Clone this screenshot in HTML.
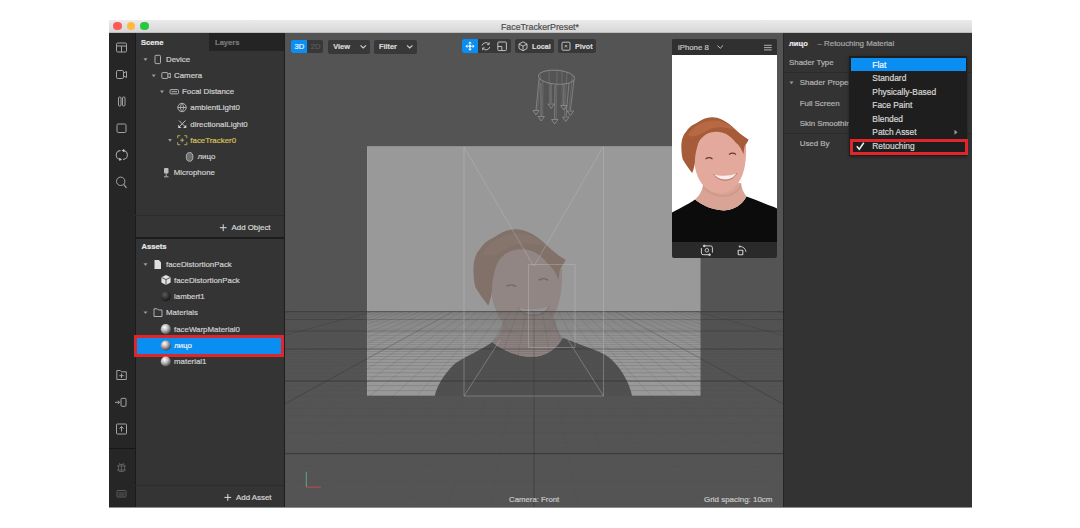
<!DOCTYPE html>
<html><head><meta charset="utf-8">
<style>
*{margin:0;padding:0;box-sizing:border-box}
html,body{width:1080px;height:528px;background:#fff;overflow:hidden;font-family:"Liberation Sans",sans-serif;position:relative}
.a{position:absolute}
.t{position:absolute;white-space:nowrap;color:#cfcfcf;font-size:7.9px;line-height:10px;height:10px;-webkit-text-stroke:0.2px currentColor}
.b{font-weight:bold}
svg{position:absolute;overflow:visible}
.btn{position:absolute;background:#383838;border-radius:2px}
</style></head><body>
<!-- window frame -->
<div class="a" style="left:109px;top:20px;width:863px;height:487px;background:#262626"></div>
<!-- title bar -->
<div class="a" style="left:109px;top:20px;width:863px;height:13px;background:linear-gradient(#ebebeb,#d7d7d7);border-bottom:1px solid #bdbdbd"></div>
<div class="a" style="left:113.3px;top:21.8px;width:8.6px;height:8.6px;border-radius:50%;background:#fc5b57"></div>
<div class="a" style="left:126.8px;top:21.8px;width:8.6px;height:8.6px;border-radius:50%;background:#fcba3e"></div>
<div class="a" style="left:140.4px;top:21.8px;width:8.6px;height:8.6px;border-radius:50%;background:#2bc63f"></div>
<div class="t" style="left:501px;top:21.5px;color:#4d4d4d;font-size:8.8px;line-height:10px">FaceTrackerPreset*</div>

<!-- left icon column -->
<div class="a" style="left:109px;top:33px;width:27px;height:474px;background:#262626;border-right:1px solid #1a1a1a"></div>
<div class="a" style="left:109px;top:448px;width:26px;height:1px;background:#171717"></div>
<svg width="1080" height="528" style="left:0;top:0" fill="none" stroke="#a3a3a3" stroke-width="1">
  <!-- layout -->
  <rect x="116.5" y="43" width="10" height="9" rx="1.2"/>
  <path d="M116.5 46H126.5M121.5 46V52"/>
  <!-- camera -->
  <rect x="116.5" y="70.5" width="7" height="8" rx="1.2"/>
  <path d="M123.5 73L126.5 71.5V77.5L123.5 76"/>
  <!-- pause-ish -->
  <rect x="118.5" y="97" width="2.5" height="9" rx="1"/>
  <rect x="122.5" y="97" width="2.5" height="9" rx="1"/>
  <!-- square -->
  <rect x="117" y="124" width="9" height="8.5" rx="1.2"/>
  <!-- refresh -->
  <path d="M120.6 150.6A4.4 4.4 0 0 0 120.6 159.4M123 159.4A4.4 4.4 0 0 0 123 150.6" stroke-width="1.1"/>
  <path d="M119.2 157.8L122 159.5L119.4 161Z M124.4 152.2L121.6 150.5L124.2 149Z" fill="#c8c8c8" stroke="none"/>
  <!-- search -->
  <circle cx="120.7" cy="181.3" r="4.2"/>
  <path d="M123.7 184.3L126.5 187.8" stroke-width="1.2"/>
  <!-- folder + -->
  <path d="M116.8 379.5V370.5H120.3L121.5 371.8H126.3V379.5Z"/>
  <path d="M121.5 373.5V378M119.3 375.7H123.8"/>
  <!-- import -->
  <rect x="121" y="398.3" width="5" height="8" rx="1"/>
  <path d="M115 402.3H119.5M117.8 400.6L119.6 402.3L117.8 404"/>
  <!-- upload -->
  <rect x="116.5" y="424" width="10" height="10" rx="0.8"/>
  <path d="M121.5 431.5V426.5M119.5 428.5L121.5 426.5L123.5 428.5"/>
  <!-- bug (dim) -->
  <g stroke="#5c5c5c">
    <rect x="118.5" y="464.5" width="6" height="7" rx="1.5"/>
    <path d="M117 466H126M117 470H126M121.5 464.5V471.5M119.5 463L120 464.5M123.5 463L123 464.5"/>
    <rect x="117" y="490.5" width="9" height="6.5" rx="0.8"/>
    <path d="M118.5 493H124.5M118.5 495H124.5"/>
  </g>
</svg>

<!-- scene panel -->
<div class="a" style="left:136px;top:33px;width:149px;height:474px;background:#343434"></div>
<div class="a" style="left:209px;top:33px;width:76px;height:18px;background:#242424"></div>
<div class="t b" style="left:141px;top:37.5px;color:#e8e8e8;font-size:7.6px">Scene</div>
<div class="t b" style="left:215px;top:37.5px;color:#7a7a7a;font-size:7.6px">Layers</div>

<svg width="1080" height="528" style="left:0;top:0" fill="none" stroke="#bdbdbd" stroke-width="0.9">
  <!-- triangles -->
  <g fill="#9a9a9a" stroke="none">
    <path d="M143.5 58.3H147.5L145.5 61Z"/>
    <path d="M151.7 74.5H155.7L153.7 77.2Z"/>
    <path d="M160 90.6H164L162 93.3Z"/>
    <path d="M168 139H172L170 141.7Z"/>
    <path d="M143.5 263.2H147.5L145.5 265.9Z"/>
    <path d="M143.5 311.4H147.5L145.5 314.1Z"/>
  </g>
  <!-- device phone -->
  <rect x="155" y="55.3" width="5.5" height="8.3" rx="1"/>
  <!-- camera -->
  <rect x="161.8" y="72.6" width="6" height="5.8" rx="0.8"/>
  <path d="M167.8 74.2L170.3 73.2V77.8L167.8 76.8"/>
  <!-- focal distance -->
  <rect x="170" y="89.6" width="8.5" height="4.2" rx="1"/>
  <path d="M171.5 91.7H177"/>
  <!-- ambient light globe -->
  <circle cx="182" cy="107.5" r="4.2"/>
  <path d="M177.8 107.5H186.2M182 103.3C180 105.5 180 109.5 182 111.7M182 103.3C184 105.5 184 109.5 182 111.7"/>
  <!-- directional light -->
  <path d="M179 120.5L185.5 127M185.5 120.5L179 127" stroke-width="1"/><path d="M178.2 124.8V128H181.4ZM186.3 124.8V128H183.1Z" fill="#d0d0d0" stroke="none"/>
  <!-- face tracker -->
  <g stroke="#c4b062">
    <path d="M177.7 138.2V135.7H180.2M184.3 135.7H186.8V138.2M186.8 142.2V144.7H184.3M180.2 144.7H177.7V142.2"/>
    <path d="M182.2 138.2V142.2M180.2 140.2H184.2"/>
  </g>
  <!-- face mesh -->
  <ellipse cx="189.6" cy="156.9" rx="3.3" ry="4.4" fill="#6e6e6e" stroke="#b0b0b0" stroke-width="1"/>
  <!-- microphone -->
  <rect x="164" y="168" width="4.5" height="5.5" rx="1" fill="#bdbdbd" stroke="none"/>
  <path d="M166.2 173.5V176.5M164 176.8H168.5"/>
</svg>
<div class="t" style="left:166px;top:54.5px">Device</div>
<div class="t" style="left:174px;top:70.7px">Camera</div>
<div class="t" style="left:182px;top:86.8px">Focal Distance</div>
<div class="t" style="left:190.3px;top:102.5px">ambientLight0</div>
<div class="t" style="left:190.3px;top:119.9px">directionalLight0</div>
<div class="t" style="left:190.3px;top:135.8px;color:#d6c05a">faceTracker0</div>
<div class="t" style="left:197.5px;top:151.8px">лицо</div>
<div class="t" style="left:173.7px;top:167.7px">Microphone</div>

<!-- add object row -->
<div class="a" style="left:135px;top:215px;width:150px;height:1px;background:#2d2d2d"></div>
<div class="a" style="left:135px;top:237px;width:150px;height:2px;background:#1c1c1c"></div>
<svg width="1080" height="528" style="left:0;top:0"><path d="M223.2 224.3V231.1M219.8 227.7H226.6" stroke="#dcdcdc" stroke-width="1"/></svg>
<div class="t" style="left:231.5px;top:223px;color:#d8d8d8">Add Object</div>
<div class="t b" style="left:141.5px;top:242px;color:#e6e6e6;font-size:7.6px">Assets</div>

<!-- asset rows -->
<svg width="1080" height="528" style="left:0;top:0" fill="none" stroke="#bdbdbd" stroke-width="0.9">
  <defs>
    <radialGradient id="sph" cx="0.38" cy="0.32" r="0.75">
      <stop offset="0" stop-color="#ffffff"/>
      <stop offset="0.45" stop-color="#b9b9b9"/>
      <stop offset="1" stop-color="#3c3c3c"/>
    </radialGradient>
    <radialGradient id="sphd" cx="0.4" cy="0.35" r="0.75">
      <stop offset="0" stop-color="#5a5a5a"/>
      <stop offset="1" stop-color="#0e0e0e"/>
    </radialGradient>
    <radialGradient id="sphc" cx="0.38" cy="0.32" r="0.75">
      <stop offset="0" stop-color="#ffffff"/>
      <stop offset="0.45" stop-color="#b8aaa8"/>
      <stop offset="1" stop-color="#2c3440"/>
    </radialGradient>
  </defs>
  <!-- doc icon -->
  <path d="M154.5 260H158.8L161 262.2V269H154.5Z" fill="#dedede" stroke="none"/>
  <!-- cube -->
  <path d="M166 275L170.6 277.3V282.6L166 285L161.4 282.6V277.3Z" fill="#e2e2e2" stroke="none"/>
  <path d="M161.6 277.4L166 279.6L170.4 277.4M166 279.6V284.8" stroke="#343434" stroke-width="0.8"/>
  <circle cx="165.8" cy="296.2" r="5.1" fill="url(#sphd)" stroke="none"/>
  <!-- folder -->
  <path d="M154 316.5V308.8H157.3L158.4 310H162V316.5Z"/>
  <circle cx="165.8" cy="329.2" r="5.1" fill="url(#sph)" stroke="none"/>
</svg>
<div class="t" style="left:166px;top:260.4px">faceDistortionPack</div>
<div class="t" style="left:174px;top:275.7px">faceDistortionPack</div>
<div class="t" style="left:174px;top:292px">lambert1</div>
<div class="t" style="left:166px;top:307.6px">Materials</div>
<div class="t" style="left:174px;top:325px">faceWarpMaterial0</div>

<!-- highlighted row -->
<div class="a" style="left:133.5px;top:334.5px;width:151px;height:22.2px;background:#e0262a"></div>
<div class="a" style="left:136.7px;top:337.6px;width:144px;height:16px;background:#0b8ef2"></div>
<svg width="1080" height="528" style="left:0;top:0">
  <circle cx="165.8" cy="345.5" r="5.1" fill="url(#sphc)"/>
  <circle cx="165.8" cy="361.5" r="5.1" fill="url(#sph)"/>
</svg>
<div class="t" style="left:174px;top:340.5px;color:#f2f2f2">лицо</div>
<div class="t" style="left:174px;top:356.5px">material1</div>

<!-- add asset row -->
<div class="a" style="left:135px;top:485px;width:150px;height:1px;background:#2d2d2d"></div>
<svg width="1080" height="528" style="left:0;top:0"><path d="M227.8 494V500.8M224.4 497.4H231.2" stroke="#dcdcdc" stroke-width="1"/></svg>
<div class="t" style="left:236px;top:493.4px;color:#d8d8d8">Add Asset</div>

<!-- viewport -->
<div class="a" style="left:284px;top:33px;width:1px;height:474px;background:#1e1e1e"></div>
<div class="a" style="left:285px;top:33px;width:498px;height:474px;background:#545454"></div>


<!-- VIEWPORT CONTENT -->
<svg width="1080" height="528" style="left:0;top:0">
  <defs>
    <clipPath id="vpclip"><rect x="285" y="33" width="498" height="474"/></clipPath>
  </defs>
  <g clip-path="url(#vpclip)">
  <!-- plane -->
  <rect x="367.3" y="146.4" width="333.2" height="249.5" fill="#999"/>
  <!-- person (viewport) -->
  <defs><g id="person">
    <path d="M-20 192L-19 184C-17 176 -12 168 -5 161C0 157 7 154 14 150C18 148 21 146 23 144.5C30 150 40 155 52 155.5C62 155 70 150 74.5 141.5C84 145 94 149 102 152C110 155 117 164 121 172C124 178 126 184 126 192Z" fill="#0c0c0c"/>
    <path d="M23 144.5C28 140 30 136 31 130L69 128C69.5 133 71.5 138 74.5 141.5C70 150 62 155 52 155.5C40 155 30 150 23 144.5Z" fill="#d9a395"/>
    <path d="M31 130C35 136 44 140 51 140C59 140 66 136 69 128L69.3 132C65 139 58 142 51 142C44 142 36 139 31 133Z" fill="#c99484" opacity="0.6"/>
    <path d="M21.8 96C21.5 112 25 126 34 133C40 137.5 46 138.5 51 138C59 137 66 131 70 121C73.5 112 75 100 73.5 86L60 74L34 76Z" fill="#e3a99c"/>
    <path d="M42 119.5C49 121.5 58 121 64.5 118.5C61 125.5 47 126.5 42 119.5Z" fill="#f6eeea"/>
    <path d="M41.5 119C47 127.5 60 127.5 65 118" stroke="#b86a66" stroke-width="0.8" fill="none"/>
    <path d="M33.5 104C35.5 102.5 38.5 102.5 40.5 104" stroke="#5e3a32" stroke-width="1.1" fill="none"/>
    <path d="M57 99.5C59 98 62 98 64 99.5" stroke="#5e3a32" stroke-width="1.1" fill="none"/>
    <path d="M9.4 93.8C9 86 11 80 13.5 77.6C17 72 20 70 24.2 68.2C30 64 35 62 40.4 62.2C47 62.5 52 65 56.5 68.5C61 72 64 75 67.3 78C71 81 74 83 76.5 84.5C75.5 88 73.5 89.5 72.7 91C72 94 71.8 97 71.4 99.2C70 95 68 91 64 87.7C60 83 56 79 50 77.5C44 76 38 77 33 80C29 83 26.5 87 25 92.4C23.5 98 23 102 22.9 107.2C22.5 111 21.5 115 20.2 118C17 114 14 110 10.8 104.5C9.8 101 9.5 97 9.4 93.8Z" fill="#a65b39"/>
    <path d="M16 80C22 70 32 65 44 65.5C52 66 58 70 63 75C54 72 44 71 36 75C28 79 22 84 16 80Z" fill="#bb6d47" opacity="0.8"/>
  </g></defs>
  <rect x="367.3" y="146.4" width="333.2" height="249.5" fill="#656565"/>
  <filter id="desat" color-interpolation-filters="sRGB"><feComponentTransfer><feFuncR type="gamma" exponent="0.6"/><feFuncG type="gamma" exponent="0.6"/><feFuncB type="gamma" exponent="0.6"/></feComponentTransfer><feColorMatrix type="saturate" values="0.8"/></filter><g opacity="0.337" filter="url(#desat)">
    <g transform="translate(460.6 144) scale(1.37)">
      <rect x="-68.3" y="1.7" width="243.2" height="182.1" fill="#fff"/>
      <use href="#person"/>
    </g>
  </g>
  <rect x="285" y="395.9" width="498" height="12" fill="#545454"/>
  <!-- grid -->
  <defs>
    <linearGradient id="gmaj" gradientUnits="userSpaceOnUse" x1="0" y1="311" x2="0" y2="400">
      <stop offset="0" stop-color="#2e2e2e" stop-opacity="0.3"/>
      <stop offset="0.45" stop-color="#2e2e2e" stop-opacity="0.6"/>
      <stop offset="1" stop-color="#2e2e2e" stop-opacity="0.8"/>
    </linearGradient>
    <linearGradient id="grmaj" gradientUnits="userSpaceOnUse" x1="0" y1="311" x2="0" y2="420">
      <stop offset="0" stop-color="#2e2e2e" stop-opacity="0.25"/>
      <stop offset="1" stop-color="#2e2e2e" stop-opacity="0.55"/>
    </linearGradient>
  </defs>
  <path d="M285 312.2H783M285 312.9H783M285 313.7H783M285 314.4H783M285 315.2H783M285 316.0H783M285 316.8H783M285 317.7H783M285 318.6H783M285 320.5H783M285 321.5H783M285 322.5H783M285 323.6H783M285 324.7H783M285 325.9H783M285 327.1H783M285 328.4H783M285 329.7H783M285 332.5H783M285 334.0H783M285 335.5H783M285 337.2H783M285 338.9H783M285 340.7H783M285 342.6H783M285 344.6H783M285 346.8H783M285 351.4H783M285 353.9H783M285 356.5H783M285 359.4H783M285 362.4H783M285 365.6H783M285 369.0H783M285 372.7H783M285 376.7H783M285 385.6H783M285 390.6H783M285 396.0H783M285 402.0H783M285 408.5H783M285 415.7H783M285 423.7H783M285 432.6H783M285 442.5H783M285 466.5H783M285 481.1H783M285 498.0H783" stroke="#4e4e4e" stroke-opacity="0.3" stroke-width="0.8" fill="none"/>
  <path d="M299.7 311.4L-732.7 507M307.7 311.4L-689.0 507M315.8 311.4L-645.4 507M323.9 311.4L-601.7 507M332.0 311.4L-558.0 507M340.1 311.4L-514.3 507M348.1 311.4L-470.6 507M356.2 311.4L-427.0 507M364.3 311.4L-383.3 507M380.5 311.4L-295.9 507M388.5 311.4L-252.2 507M396.6 311.4L-208.6 507M404.7 311.4L-164.9 507M412.8 311.4L-121.2 507M420.9 311.4L-77.5 507M428.9 311.4L-33.8 507M437.0 311.4L9.8 507M445.1 311.4L53.5 507M461.3 311.4L140.9 507M469.4 311.4L184.6 507M477.4 311.4L228.2 507M485.5 311.4L271.9 507M493.6 311.4L315.6 507M501.7 311.4L359.3 507M509.8 311.4L403.0 507M517.8 311.4L446.6 507M525.9 311.4L490.3 507M542.1 311.4L577.7 507M550.2 311.4L621.4 507M558.2 311.4L665.0 507M566.3 311.4L708.7 507M574.4 311.4L752.4 507M582.5 311.4L796.1 507M590.6 311.4L839.8 507M598.6 311.4L883.4 507M606.7 311.4L927.1 507M622.9 311.4L1014.5 507M631.0 311.4L1058.2 507M639.1 311.4L1101.8 507M647.1 311.4L1145.5 507M655.2 311.4L1189.2 507M663.3 311.4L1232.9 507M671.4 311.4L1276.6 507M679.5 311.4L1320.2 507M687.5 311.4L1363.9 507M703.7 311.4L1451.3 507M711.8 311.4L1495.0 507M719.9 311.4L1538.6 507M727.9 311.4L1582.3 507M736.0 311.4L1626.0 507M744.1 311.4L1669.7 507M752.2 311.4L1713.4 507M760.3 311.4L1757.0 507M768.3 311.4L1800.7 507" stroke="#505050" stroke-opacity="0.25" stroke-width="0.7" fill="none"/>
  <path d="M285 311.5H783M285 319.5H783M285 331.0H783M285 349.0H783M285 381.0H783M285 453.7H783" stroke="url(#gmaj)" stroke-width="1" fill="none"/>
  <path d="M291.6 311.4L-776.4 507M372.4 311.4L-339.6 507M453.2 311.4L97.2 507M534.0 311.4L534.0 507M614.8 311.4L970.8 507M695.6 311.4L1407.6 507M776.4 311.4L1844.4 507" stroke="url(#grmaj)" stroke-width="0.9" fill="none"/>
  <path d="M285 311.6H783" stroke="#3a3a3a" stroke-opacity="0.45" stroke-width="1.4"/>
  <!-- frustum -->
  <g stroke="#c4c4c4" stroke-opacity="0.45" stroke-width="0.8" fill="none">
    <path d="M464 147V396H603.5V147"/>
    <path d="M464 147L533.5 266M603 147L534 266"/>
    <path d="M464 396L500 340M603.5 396L568 340"/>
    <path d="M528.5 264.5V347.5H575V264.5Z"/>
  </g>
  <!-- light gizmo -->
  <g stroke="#9a9a9a" stroke-width="0.7" fill="none">
    <ellipse cx="556.5" cy="77.2" rx="18.3" ry="7" transform="rotate(4 556.5 77.2)"/>
    <path d="M539 79L536 110M541 83L541 116M551 84L551 103M555 85L554.7 119M564 84L563.8 105M569 83L566 116M574 80L570.4 110" stroke-opacity="0.9"/><path d="M540.5 75L537.6 110M543 80L542.6 116M549 71L549.6 103M557 71L556.3 119M562 71L562.2 105M567 72L564.3 116M572.5 75L569 110" stroke-opacity="0.45"/>
    <path d="M533 110.5H539L536 115ZM538 116.5H544.4L541.2 121ZM548 104H554.4L551.2 108.5ZM551.5 119.5H558L554.7 124ZM560.6 105.5H567L563.8 110ZM562.6 117H569L565.8 121.5ZM567.2 111H573.6L570.4 115.5Z"/>
  </g>
  <!-- axis -->
  <path d="M306.3 471.8V487" stroke="#5fa878" stroke-width="1"/>
  <path d="M306.3 487.2H321" stroke="#c0485a" stroke-width="1"/>
  </g>
</svg>
<div class="t" style="left:509px;top:494.6px;color:#c8c8c8;font-size:7.8px">Camera: Front</div>
<div class="t" style="left:704px;top:495.2px;color:#c8c8c8;font-size:7.95px">Grid spacing: 10cm</div>

<!-- toolbar -->
<div class="btn" style="left:290.7px;top:39.8px;width:32.3px;height:13.6px"></div>
<div class="a" style="left:290.7px;top:39.8px;width:16.3px;height:13.6px;background:#0b8ef2;border-radius:2px 0 0 2px"></div>
<div class="t" style="left:294.6px;top:41.8px;color:#eef6ff;font-size:7.6px">3D</div>
<div class="t" style="left:310.8px;top:41.8px;color:#5a5a5a;font-size:7.6px">2D</div>
<div class="btn" style="left:328px;top:39.5px;width:42px;height:14px"></div>
<div class="t b" style="left:333.2px;top:41.7px;color:#d8d8d8;font-size:7.4px">View</div>
<div class="btn" style="left:374px;top:39.5px;width:42.5px;height:14px"></div>
<div class="t b" style="left:379px;top:41.7px;color:#d8d8d8;font-size:7.3px">Filter</div>
<svg width="1080" height="528" style="left:0;top:0" fill="none" stroke="#d0d0d0" stroke-width="1.1">
  <path d="M360.5 45.3L363.2 48L366 45.3M407 45.3L409.7 48L412.5 45.3"/>
</svg>
<div class="btn" style="left:462px;top:39.3px;width:49.3px;height:13.8px"></div>
<div class="a" style="left:462px;top:39.3px;width:16px;height:13.8px;background:#0b8ef2;border-radius:2px 0 0 2px"></div>
<div class="btn" style="left:514.7px;top:39.3px;width:39.3px;height:13.8px"></div>
<div class="t b" style="left:532px;top:41.5px;color:#d8d8d8;font-size:7.2px">Local</div>
<div class="btn" style="left:557.8px;top:39.3px;width:38.2px;height:13.8px"></div>
<div class="t b" style="left:575px;top:41.5px;color:#d8d8d8;font-size:7.2px">Pivot</div>
<svg width="1080" height="528" style="left:0;top:0" fill="none" stroke="#cfcfcf" stroke-width="0.9">
  <!-- move icon -->
  <g fill="#fff" stroke="none">
    <path d="M470 41.6L471.8 43.6H468.2ZM470 50.8L471.8 48.8H468.2ZM465.4 46.2L467.4 44.4V48ZM474.6 46.2L472.6 44.4V48Z"/>
    <rect x="468.9" y="45.1" width="2.2" height="2.2"/>
  </g>
  <path d="M469.9 43.5V49M467.3 46.2H472.7" stroke="#fff" stroke-width="0.8"/>
  <!-- rotate -->
  <path d="M482 45.5A4 4 0 0 1 489 44.2M489.8 47A4 4 0 0 1 482.8 48.3"/>
  <path d="M489.2 42.3V44.6H487M482.6 50.2V47.9H484.8" stroke-width="0.8"/>
  <!-- scale -->
  <rect x="497.8" y="42" width="8.6" height="8.6" rx="1"/>
  <path d="M497.8 46.5H501.8V50.6"/>
  <!-- cube -->
  <path d="M523 41.8L527 44V48.5L523 50.7L519 48.5V44ZM519 44L523 46.2L527 44M523 46.2V50.7"/>
  <!-- pivot -->
  <rect x="562" y="42.2" width="8" height="8" rx="1"/>
  <path d="M564.8 45L567.2 47.4M567.2 45L564.8 47.4" stroke-width="0.8"/>
</svg>

<!-- phone preview -->
<div class="a" style="left:672px;top:39px;width:105px;height:219px;background:#2a2a2a;border-radius:2px"></div><div class="a" style="left:672px;top:39px;width:105px;height:16px;background:#303030;border-radius:2px 2px 0 0"></div>
<div class="a" style="left:672px;top:54.7px;width:105px;height:187.3px;background:#fff;overflow:hidden">
  <svg width="105" height="188" style="left:0;top:0"><use href="#person"/></svg>
</div>
<div class="t" style="left:678px;top:43.3px;color:#c4c4c4;font-size:7.8px">iPhone 8</div>
<svg width="1080" height="528" style="left:0;top:0" fill="none" stroke="#cfcfcf" stroke-width="0.9">
  <path d="M717.4 45.5L720.2 48.3L723 45.5"/>
  <path d="M764 45.3H771.7M764 47.6H771.7M764 49.9H771.7" stroke-width="0.8"/>
  <!-- camera flip -->
  <path d="M704 245.9H710.6Q712.4 245.9 712.4 247.7V252.6M709.8 254.7H703.2Q701.4 254.7 701.4 252.9V248" stroke-width="1"/>
  <circle cx="706.9" cy="250.3" r="1.8"/>
  <circle cx="704.2" cy="245.9" r="0.9" fill="#cfcfcf"/>
  <circle cx="709.5" cy="254.7" r="0.9" fill="#cfcfcf"/>
  <!-- rotate device -->
  <rect x="738.2" y="250.2" width="4.6" height="4.6" rx="0.5" stroke-width="1.1"/>
  <path d="M740.2 246.5Q745 246.8 746 251.8" stroke-width="0.9"/>
  <circle cx="739.7" cy="246.6" r="1" fill="#cfcfcf" stroke="none"/>
</svg>

<!-- right panel -->
<div class="a" style="left:783px;top:33px;width:1px;height:474px;background:#262626"></div>
<div class="a" style="left:784px;top:33px;width:188px;height:474px;background:#333"></div>

<div class="t b" style="left:789px;top:38.8px;color:#e8e8e8;font-size:7.6px">лицо</div>
<div class="t" style="left:817.5px;top:38.8px;color:#a8a8a8;font-size:7.9px">– Retouching Material</div>
<div class="t" style="left:789px;top:58.2px;color:#b4b4b4">Shader Type</div>
<div class="a" style="left:783px;top:72px;width:189px;height:1px;background:#2b2b2b"></div>
<svg width="1080" height="528" style="left:0;top:0"><path d="M789.5 81.5H793.5L791.5 84.2Z" fill="#999"/></svg>
<div class="t" style="left:799.8px;top:78.4px;color:#b4b4b4">Shader Properties</div>
<div class="t" style="left:799.7px;top:98.6px;color:#b4b4b4">Full Screen</div>
<div class="t" style="left:799.7px;top:118.6px;color:#b4b4b4">Skin Smoothing</div>
<div class="a" style="left:783px;top:133px;width:189px;height:1px;background:#2b2b2b"></div>
<div class="t" style="left:799.7px;top:138.6px;color:#b4b4b4">Used By</div>

<!-- dropdown -->
<div class="a" style="left:849.4px;top:56.2px;width:118px;height:99.5px;background:#1e1e1e;box-shadow:0 1px 3px rgba(0,0,0,0.4)"></div>
<div class="a" style="left:850.5px;top:57.9px;width:115.5px;height:13.6px;background:#0b8ef2"></div>
<div class="t" style="left:872.3px;top:59.8px;color:#f4f8ff;font-size:8.4px">Flat</div>
<div class="t" style="left:872.3px;top:73px;color:#d8d8d8;font-size:8.4px">Standard</div>
<div class="t" style="left:872.3px;top:86.6px;color:#d8d8d8;font-size:8.4px">Physically-Based</div>
<div class="t" style="left:872.3px;top:100.1px;color:#d8d8d8;font-size:8.4px">Face Paint</div>
<div class="t" style="left:872.3px;top:113.7px;color:#d8d8d8;font-size:8.4px">Blended</div>
<div class="t" style="left:872.3px;top:127.2px;color:#d8d8d8;font-size:8.4px">Patch Asset</div>
<svg width="1080" height="528" style="left:0;top:0"><path d="M954.5 129.8L957.5 132.3L954.5 134.8Z" fill="#9a9a9a"/></svg>
<div class="a" style="left:850px;top:138.5px;width:117.5px;height:16.7px;border:3px solid #e0262a"></div>
<svg width="1080" height="528" style="left:0;top:0"><path d="M856.8 146.2L859.3 149.3L863.8 142.8" stroke="#f0f0f0" stroke-width="1.5" fill="none"/></svg>
<div class="t" style="left:872.3px;top:141.2px;color:#d8d8d8;font-size:8.4px">Retouching</div>

<div class="a" style="left:109px;top:507px;width:863px;height:1px;background:#1e1e1e;opacity:0.5"></div>
</body></html>
